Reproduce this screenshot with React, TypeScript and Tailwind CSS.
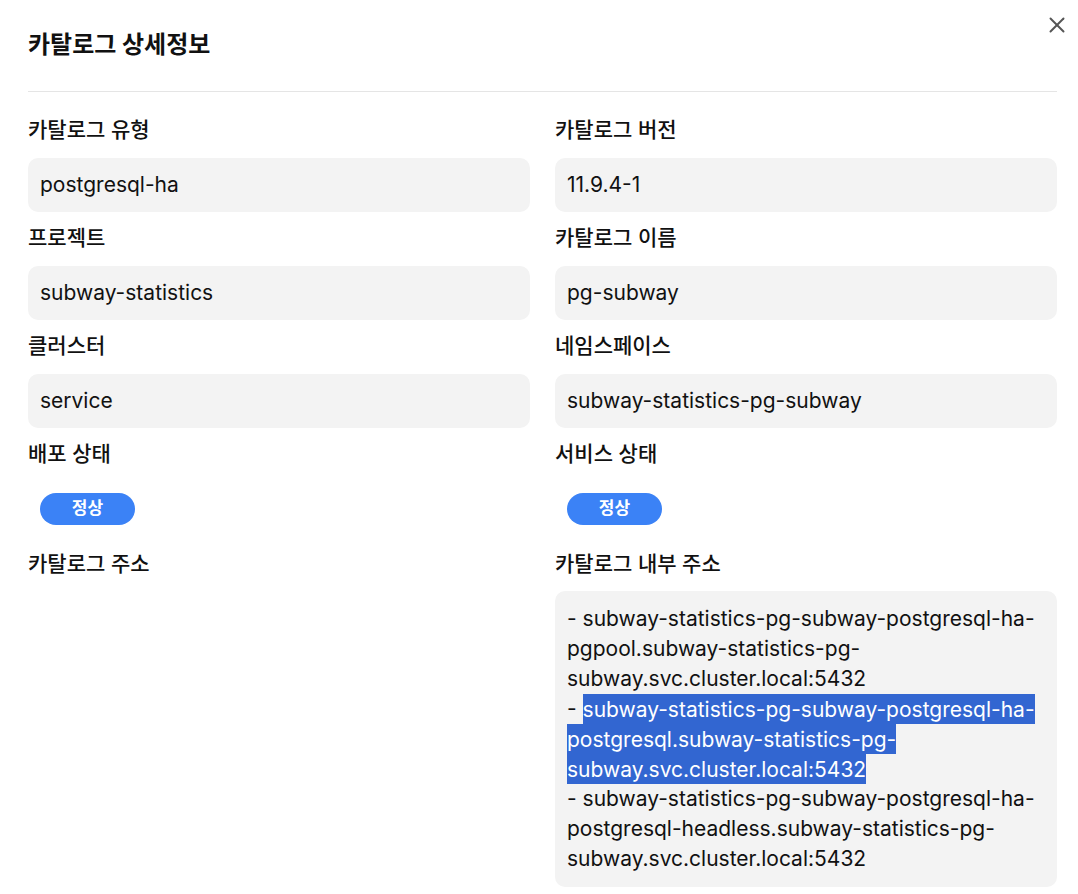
import { X } from 'lucide-react'

interface Field {
  label: string
  value?: string
  badge?: string
}

const rows: [Field, Field][] = [
  [
    { label: '카탈로그 유형', value: 'postgresql-ha' },
    { label: '카탈로그 버전', value: '11.9.4-1' },
  ],
  [
    { label: '프로젝트', value: 'subway-statistics' },
    { label: '카탈로그 이름', value: 'pg-subway' },
  ],
  [
    { label: '클러스터', value: 'service' },
    { label: '네임스페이스', value: 'subway-statistics-pg-subway' },
  ],
  [
    { label: '배포 상태', badge: '정상' },
    { label: '서비스 상태', badge: '정상' },
  ],
]

function FieldBlock({ field }: { field: Field }) {
  return (
    <div className="flex flex-col">
      <div className="h-[28px] leading-[28px] text-[21px] font-medium text-[#111]">{field.label}</div>
      {field.badge ? (
        <div className="mt-[14px] h-[54px] flex items-center px-3">
          <span className="inline-flex h-[32px] w-[95px] items-center justify-center rounded-full bg-[#3b82f6] text-[17px] font-bold text-white">
            {field.badge}
          </span>
        </div>
      ) : (
        <div className="mt-[14px] h-[54px] flex items-center rounded-[10px] bg-[#f3f3f3] px-3 text-[21px] text-[#111]">
          {field.value}
        </div>
      )}
    </div>
  )
}

export default function App() {
  return (
    <div
      className="relative w-[1078px] min-h-[894px] bg-white pl-[28px] pr-[21px] pt-[28px]"
      style={{ fontFamily: "Inter, 'Noto Sans CJK KR', sans-serif" }}
    >
      <button className="absolute right-[8px] top-[12px] text-[#555]">
        <X size={26} strokeWidth={1.8} />
      </button>

      {/* 헤더 */}
      <h2 className="h-[34px] leading-[34px] text-[24px] font-bold text-[#111]">카탈로그 상세정보</h2>
      <div className="mt-[29px] h-px bg-[#e5e5e5]" />

      <div className="mt-[24px] flex flex-col gap-[12px]">
        {rows.map((row, i) => (
          <div key={i} className="grid grid-cols-2 gap-x-[25px]">
            <FieldBlock field={row[0]} />
            <FieldBlock field={row[1]} />
          </div>
        ))}

        <div className="mt-[2px] grid grid-cols-2 gap-x-[25px]">
          <div className="h-[28px] leading-[28px] text-[21px] font-medium text-[#111]">카탈로그 주소</div>
          <div className="flex flex-col">
            <div className="h-[28px] leading-[28px] text-[21px] font-medium text-[#111]">카탈로그 내부 주소</div>
            <div className="mt-[13px] rounded-[10px] bg-[#f3f3f3] px-3 py-[13px] text-[21px] leading-[30px] text-[#111]">
              <div>- subway-statistics-pg-subway-postgresql-ha-pgpool.subway-statistics-pg-subway.svc.cluster.local:5432</div>
              <div>
                -{' '}
                <span className="bg-[#3266d1] py-[2.5px] text-white">
                  subway-statistics-pg-subway-postgresql-ha-postgresql.subway-statistics-pg-subway.svc.cluster.local:5432
                </span>
              </div>
              <div>- subway-statistics-pg-subway-postgresql-ha-postgresql-headless.subway-statistics-pg-subway.svc.cluster.local:5432</div>
            </div>
          </div>
        </div>
      </div>
    </div>
  )
}
